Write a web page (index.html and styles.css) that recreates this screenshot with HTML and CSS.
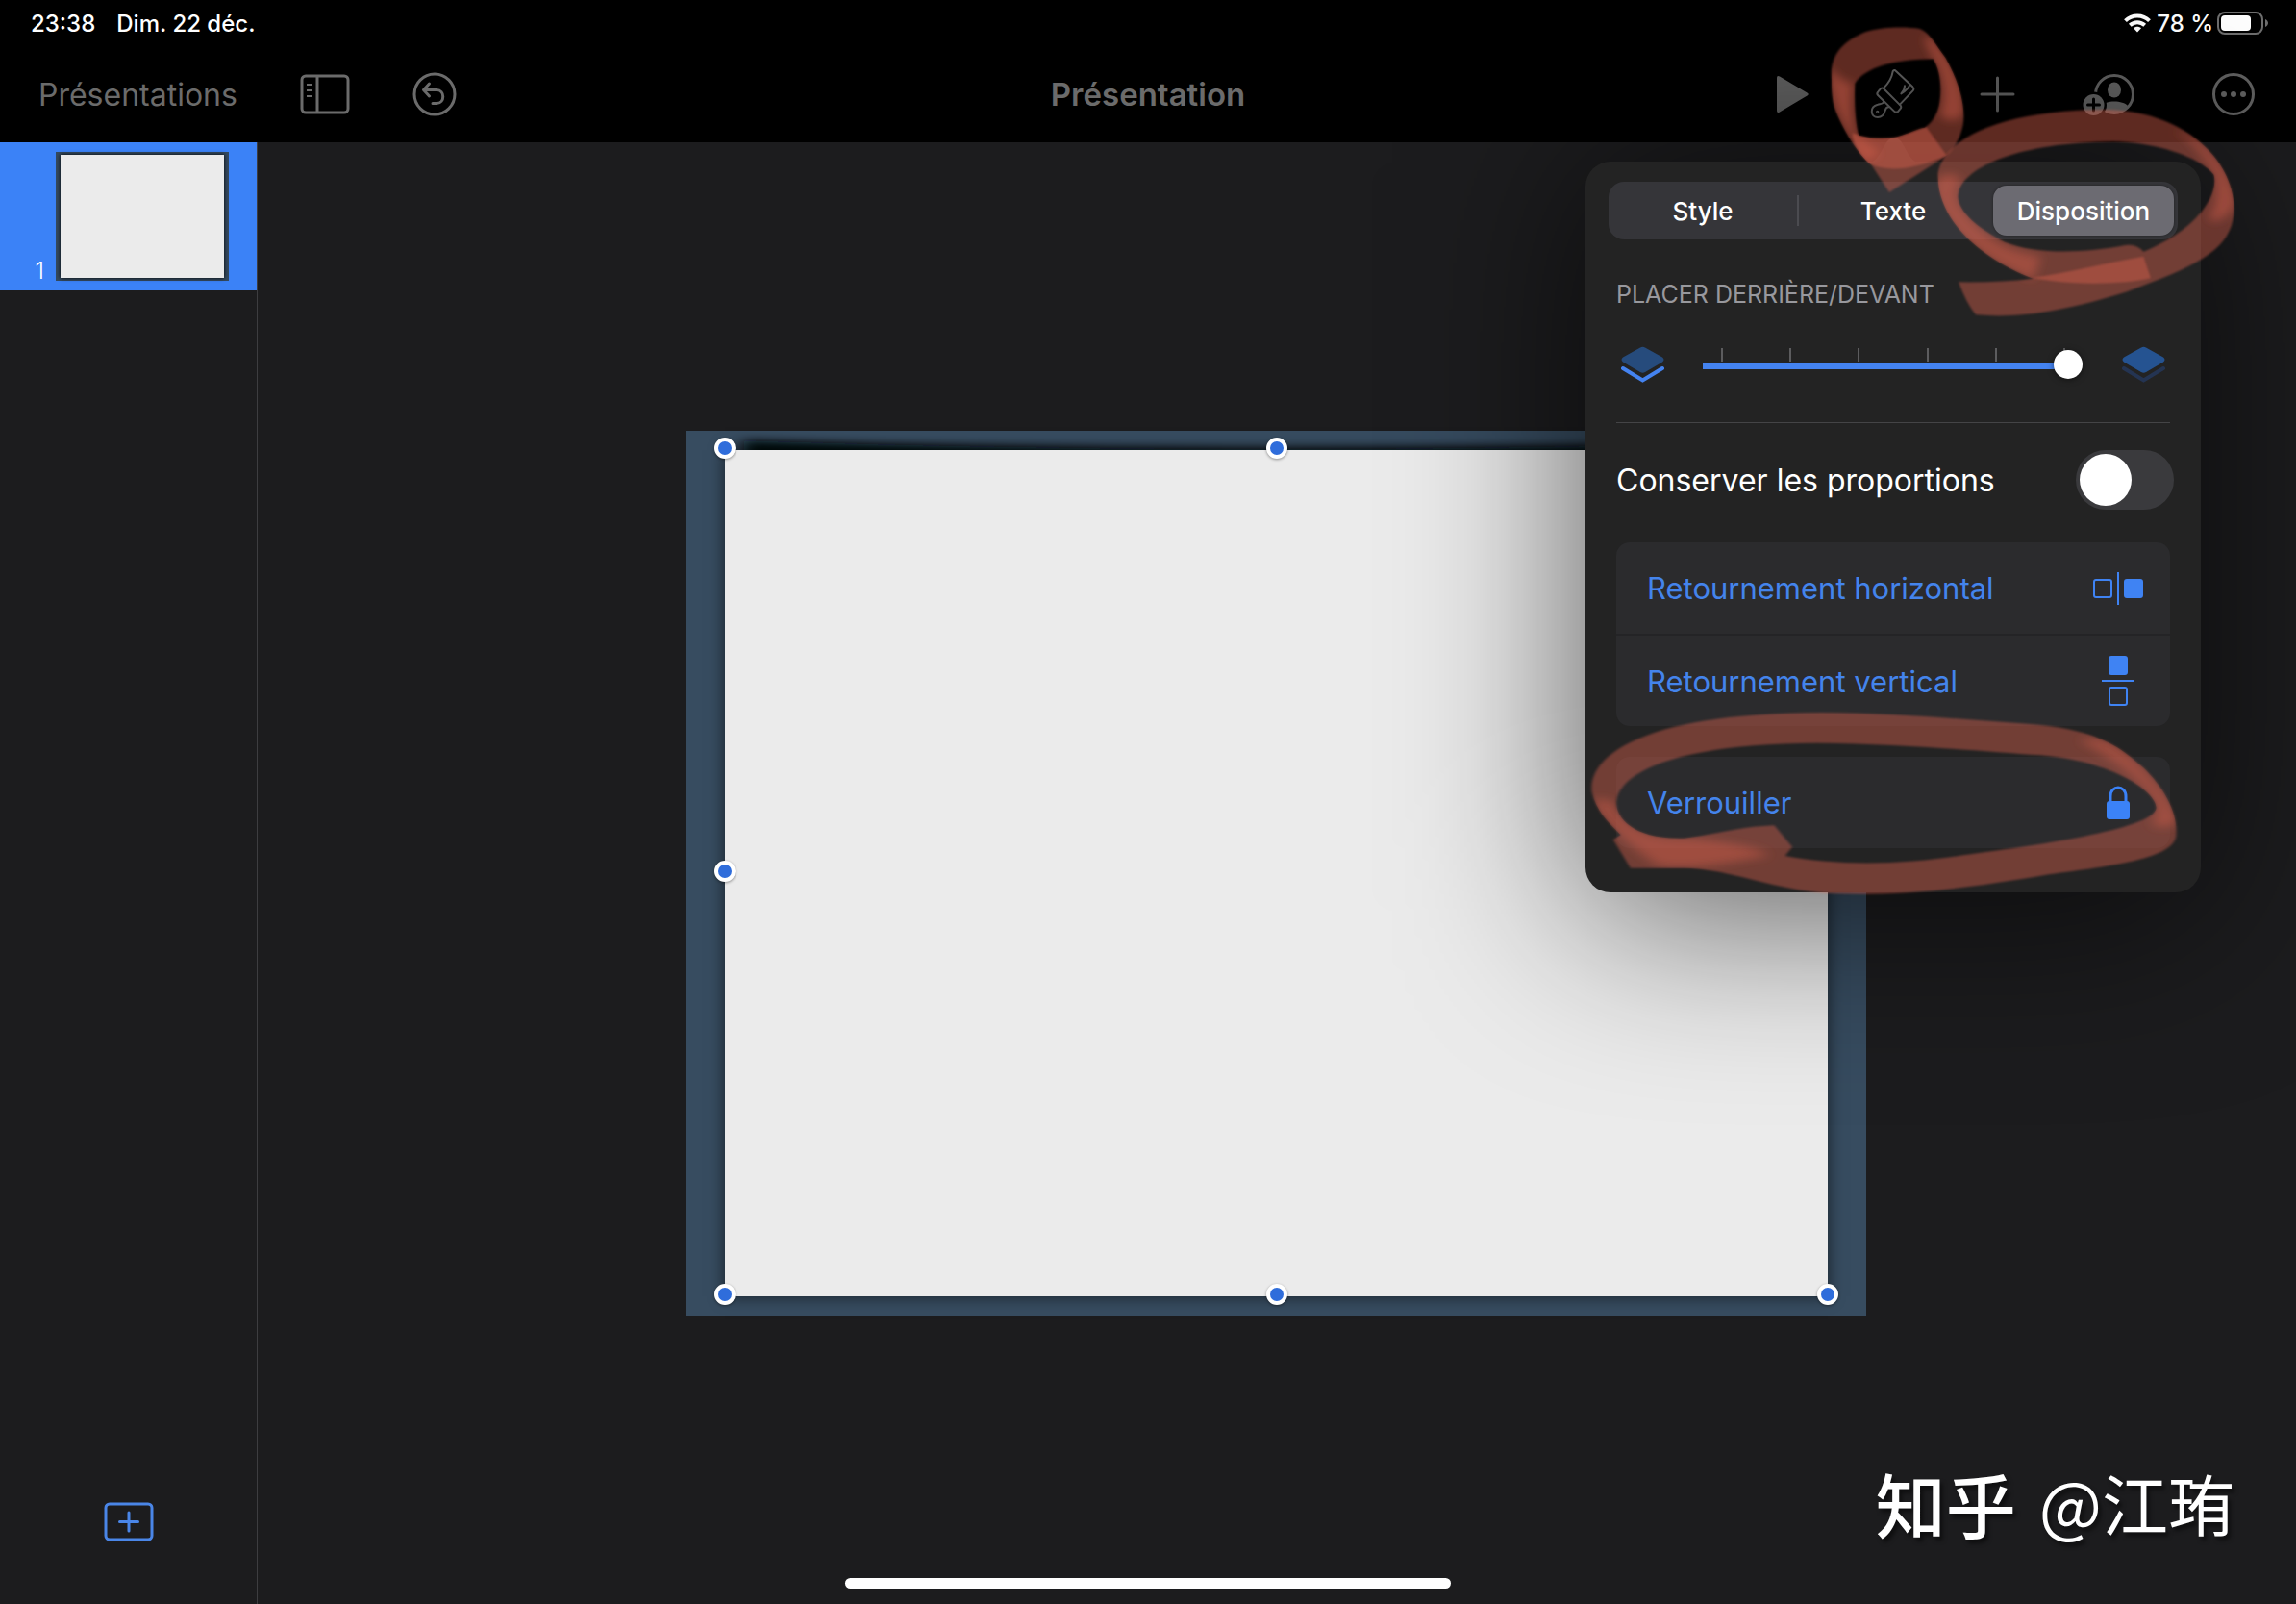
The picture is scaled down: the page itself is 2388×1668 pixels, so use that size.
FILE: index.html
```html
<!DOCTYPE html>
<html lang="fr">
<head>
<meta charset="utf-8">
<meta name="viewport" content="width=device-width, initial-scale=1">
<title>Présentation</title>
<link rel="stylesheet" href="styles.css">
</head>
<body>
<div class="app">
  <header class="topbar">
    <div class="status">
      <div class="status-left"><span>23:38</span><span>Dim. 22 déc.</span></div>
      <div class="status-right">
        <svg class="wifi" width="28" height="20" viewBox="0 0 28 20" aria-hidden="true">
          <g fill="none" stroke="#fff" stroke-width="4">
            <path d="M1.5 7.6C8.500 .8 19.500 .8 26.500 7.600"/>
            <path d="M6.300 12.300C10.800 8.100 17.200 8.100 21.700 12.300"/>
          </g>
          <path d="M14 19.500l-4-4.200c2.300-2 5.700-2 8 0z" fill="#fff"/>
        </svg>
        <span>78 %</span>
        <svg width="54" height="26" viewBox="0 0 54 26" aria-hidden="true">
          <rect x="1" y="2" width="46" height="22" rx="7" fill="none" stroke="#6e6e6e" stroke-width="2"/>
          <rect x="4" y="5" width="31" height="16" rx="4" fill="#fff"/>
          <path d="M50 9c4 2 4 6 0 8z" fill="#6e6e6e"/>
        </svg>
      </div>
    </div>
    <nav class="toolbar">
      <div class="tools-left">
        <a class="back" href="#">Présentations</a>
        <button class="tool" aria-label="Présentation des vignettes">
          <svg width="52" height="42" viewBox="0 0 52 42" fill="none" stroke="currentColor" stroke-width="3">
            <rect x="2" y="2" width="48" height="38" rx="4"/>
            <path d="M18 2v38"/><path d="M7 11h6M7 17h6M7 23h6" stroke-width="2"/>
          </svg>
        </button>
        <button class="tool" aria-label="Annuler">
          <svg width="46" height="46" viewBox="0 0 46 46" fill="none" stroke="currentColor" stroke-width="3" stroke-linecap="round" stroke-linejoin="round">
            <circle cx="23" cy="23" r="21"/>
            <path d="M17.500 12l-6 6.500 6 6.500M12 18.500h13c9 0 9 14 0 14h-4"/>
          </svg>
        </button>
      </div>
      <h1 class="title">Présentation</h1>
      <div class="tools-right">
        <button class="tool" aria-label="Lire">
          <svg width="33" height="40" viewBox="0 0 33 40"><path d="M0 3Q0 0 3 1.600L31.500 18.500Q34 20 31.500 21.500L3 38.400Q0 40 0 37z" fill="#616161"/></svg>
        </button>
        <button class="tool" aria-label="Format">
          <svg width="47" height="52" viewBox="165 156 141 156" fill="none" stroke="currentColor" stroke-width="6" stroke-linejoin="round" stroke-linecap="round">
            <path d="M208 214C224 198 233 182 236 163Q240 156 246 162L298 211Q304 218 298 224L258 266"/>
            <path d="M289 204C286 214 276 224 262 232C270 224 273 217 273 208"/>
            <path d="M207 216L259 268Q265 274 258 281L253 287Q246 293 240 287L190 238Q184 232 190 226L195 220Q201 212 207 216z"/>
            <path d="M207 254C208 264 200 263 189 266C163 272 165 306 189 306C208 306 210 292 212 285C215 274 220 273 225 274"/>
            <circle cx="188" cy="289" r="2"/>
          </svg>
        </button>
        <button class="tool" aria-label="Insérer">
          <svg width="43" height="40" viewBox="0 0 43 40" stroke="currentColor" stroke-width="3" stroke-linecap="round"><path d="M21.500 3v34M5 20h33"/></svg>
        </button>
        <button class="tool" aria-label="Collaborer">
          <svg width="64" height="48" viewBox="0 0 64 48">
            <circle cx="36" cy="24" r="19.500" fill="none" stroke="currentColor" stroke-width="3"/>
            <ellipse cx="36" cy="19.500" rx="7" ry="8" fill="currentColor"/>
            <path d="M22 36c5-6 23-6 28 0c-6 10-22 10-28 0z" fill="currentColor"/>
            <circle cx="14.500" cy="35" r="13.500" fill="#000"/>
            <circle cx="14.500" cy="35" r="11" fill="currentColor"/>
            <path d="M14.500 29v12M8.500 35h12" stroke="#000" stroke-width="3" stroke-linecap="round"/>
          </svg>
        </button>
        <button class="tool" aria-label="Plus">
          <svg width="64" height="46" viewBox="0 0 64 46" fill="currentColor">
            <circle cx="32" cy="23" r="20.500" fill="none" stroke="currentColor" stroke-width="3"/>
            <circle cx="22" cy="23" r="3"/><circle cx="32" cy="23" r="3"/><circle cx="42" cy="23" r="3"/>
          </svg>
        </button>
      </div>
    </nav>
  </header>

  <div class="body">
    <aside class="sidebar">
      <button class="thumb" aria-label="Diapositive 1">
        <span class="thumb-no">1</span>
        <span class="thumb-slide"><span class="thumb-object"></span></span>
      </button>
      <button class="add" aria-label="Ajouter une diapositive">
        <svg width="52" height="42" viewBox="0 0 52 42" fill="none" stroke="#4a86e8" stroke-width="3" stroke-linecap="round">
          <rect x="2" y="2" width="48" height="37" rx="4"/><path d="M26 11v19M16.500 20.500h19"/>
        </svg>
      </button>
    </aside>
    <main class="stage">
      <div class="slide">
        <svg class="curl" viewBox="0 0 1147 40" preserveAspectRatio="none" aria-hidden="true">
          <defs><filter id="soft" x="-5%" y="-80%" width="110%" height="260%"><feGaussianBlur stdDeviation="8 5"/></filter></defs>
          <path d="M20 10Q570 28 1127 10V40H20z" fill="#04070b" filter="url(#soft)"/>
        </svg>
        <div class="object">
          <i class="handle tl"></i><i class="handle tc"></i>
          <i class="handle ml"></i>
          <i class="handle bl"></i><i class="handle bc"></i><i class="handle br"></i>
        </div>
      </div>
    </main>
  </div>

  <div class="popover-shade"></div>
  <section class="popover" aria-label="Format">
    <div class="segments" role="radiogroup" aria-label="Onglet">
      <label class="segment"><input type="radio" name="tab"><span>Style</span></label>
      <label class="segment"><input type="radio" name="tab"><span>Texte</span></label>
      <label class="segment"><input type="radio" name="tab" checked><span>Disposition</span></label>
    </div>
    <label class="caption" for="order">PLACER DERRIÈRE/DEVANT</label>
    <div class="order">
      <svg width="45" height="38" viewBox="0 0 45 38" aria-hidden="true">
        <path d="M20 1.500Q22.500 0 25 1.500L43 11.500Q46 14 43 16.500L25 27Q22.500 28.500 20 27L2 16.500Q-1 14 2 11.500z" fill="#264b7c"/>
        <path d="M2 23L22.500 35.500L43 23" fill="none" stroke="#4483f0" stroke-width="4" stroke-linecap="round"/>
      </svg>
      <div class="range">
        <div class="ticks"><i></i><i></i><i></i><i></i><i></i><i></i></div>
        <input id="order" type="range" min="0" max="5" value="5">
      </div>
      <svg width="45" height="38" viewBox="0 0 45 38" aria-hidden="true">
        <path d="M2 23L22.500 35.500L43 23" fill="none" stroke="#243452" stroke-width="4" stroke-linecap="round"/>
        <path d="M20 1.500Q22.500 0 25 1.500L43 11.500Q46 14 43 16.500L25 27Q22.500 28.500 20 27L2 16.500Q-1 14 2 11.500z" fill="#255391"/>
      </svg>
    </div>
    <hr class="rule">
    <label class="constrain"><span>Conserver les proportions</span><input class="switch" type="checkbox" role="switch"></label>
    <div class="group">
      <button class="action"><span>Retournement horizontal</span>
        <svg width="54" height="54" viewBox="0 0 54 54" fill="none" stroke="#3f83f3" stroke-width="2" aria-hidden="true">
          <rect x="2" y="18" width="18" height="18" rx="2"/><path d="M27 10v34"/><rect x="34" y="18" width="18" height="18" rx="2" fill="#3f83f3"/>
        </svg></button>
      <button class="action"><span>Retournement vertical</span>
        <svg width="54" height="54" viewBox="0 0 54 54" fill="none" stroke="#3f83f3" stroke-width="2" aria-hidden="true">
          <rect x="18" y="2" width="18" height="18" rx="2" fill="#3f83f3"/><path d="M10 27h34"/><rect x="18" y="34" width="18" height="18" rx="2"/>
        </svg></button>
    </div>
    <div class="group">
      <button class="action"><span>Verrouiller</span>
        <svg width="54" height="36" viewBox="0 0 54 36" aria-hidden="true">
          <rect x="15" y="16" width="24" height="19" rx="3" fill="#3b82f7"/>
          <path d="M19 18V11C19 -1 35 -1 35 11V18" fill="none" stroke="#3b82f7" stroke-width="3"/>
        </svg></button>
    </div>
  </section>

  <svg class="pointer" width="50" height="26" viewBox="0 0 50 26" aria-hidden="true"><path d="M0 26C10 24 14 6 20 2Q25 -2 30 2C36 6 40 24 50 26z" fill="#232323"/></svg>

  <svg class="marks" width="748" height="960" viewBox="1640 0 748 960" aria-hidden="true">
    <defs>
      <filter id="ink" x="-5%" y="-5%" width="110%" height="110%"><feGaussianBlur stdDeviation="3"/></filter>
      <filter id="wash" x="-20%" y="-20%" width="140%" height="140%"><feGaussianBlur stdDeviation="14"/></filter>
      <clipPath id="clip-a"><path id="ring-a" clip-rule="evenodd" d="M45 190C38 110 80 70 150 40C210 22 280 24 320 30C350 40 370 80 400 120C440 190 465 270 455 330C445 375 425 410 400 428L225 540L170 455C130 430 60 310 50 260C45 230 45 210 45 190zM118 200C150 150 240 125 362 124C385 160 390 220 380 270C370 310 350 330 335 338C310 340 270 365 240 368Q180 375 130 362C120 330 115 260 118 200z"/></clipPath>
      <clipPath id="clip-b"><path id="ring-b" clip-rule="evenodd" d="M575 540C590 430 760 340 1050 342C1260 350 1395 500 1396 650C1396 780 1290 830 1100 910C930 970 800 995 680 982Q655 950 632 880Q740 882 840 870C700 810 570 690 575 540zM632 600C650 520 800 445 1060 442C1200 445 1310 500 1340 545C1355 610 1290 720 1145 785Q1125 760 1095 765C980 790 850 795 760 755C680 710 620 650 632 600z"/></clipPath>
      <clipPath id="clip-c"><path id="ring-c" clip-rule="evenodd" d="M35 850C25 740 150 605 570 603C750 605 900 625 1050 638C1230 655 1280 730 1320 775C1370 840 1402 920 1396 990C1385 1060 1250 1080 1100 1108C900 1155 750 1175 600 1168C460 1160 360 1090 250 1088H125L85 1000L102 985C70 940 45 910 35 850zM92 880C100 790 230 700 560 698C760 700 950 725 1080 736C1250 755 1350 850 1350 900C1345 970 1050 1020 900 1048C750 1080 600 1080 485 1050L502 1022L460 955C370 960 320 985 250 995C130 1000 90 930 92 880z"/></clipPath>
    </defs>
    <svg x="1890" y="20" width="200" height="190" viewBox="0 0 600 570">
      <g class="ink">
        <use href="#ring-a" filter="url(#ink)"/>
        <g clip-path="url(#clip-a)">
          <path filter="url(#wash)" d="M35 150C38 220 60 310 150 440L200 420L120 362C105 310 105 240 112 195C85 200 70 180 35 150z"/>
          <path filter="url(#ink)" d="M110 355C190 390 260 365 340 336L404 425C300 470 220 478 160 450C130 420 110 380 110 355z"/>
          <path filter="url(#wash)" d="M330 60C345 90 355 110 362 124C400 180 400 260 382 300C410 320 430 320 455 300C465 220 420 120 355 55z"/>
        </g>
      </g>
    </svg>
    <svg x="1800" y="0" width="588" height="340" viewBox="0 0 1568 1020" preserveAspectRatio="none">
      <g class="ink">
        <use href="#ring-b" filter="url(#ink)"/>
        <g clip-path="url(#clip-b)">
          <path filter="url(#wash)" d="M565 570C570 690 690 810 840 872L860 800C760 780 700 740 640 650C620 620 620 590 640 560C620 540 590 530 565 570z"/>
          <path filter="url(#ink)" d="M780 850C900 895 1080 890 1165 868L1145 800C1040 820 940 850 840 866z"/>
          <path filter="url(#wash)" d="M1230 405C1270 430 1310 480 1342 550C1350 610 1345 640 1325 680C1340 700 1370 690 1400 640C1402 550 1320 430 1230 405z"/>
        </g>
      </g>
    </svg>
    <svg x="1640" y="540" width="700" height="420" viewBox="0 0 1568 1260" preserveAspectRatio="none">
      <g class="ink">
        <use href="#ring-c" filter="url(#ink)"/>
        <g clip-path="url(#clip-c)">
          <path filter="url(#wash)" d="M35 870C50 920 100 1000 190 1080C280 1095 380 1065 450 1048C420 1020 320 1000 250 995C150 1000 90 930 85 880z"/>
          <path filter="url(#wash)" d="M1170 690C1230 730 1330 820 1350 900C1350 930 1345 940 1340 950C1360 970 1390 960 1400 940C1390 880 1320 770 1265 715C1220 680 1200 680 1170 690z"/>
        </g>
      </g>
    </svg>
  </svg>

  <div class="watermark"><span class="brand">知乎</span><span>@江珛</span></div>
  <div class="home"></div>
</div>
</body>
</html>
```
FILE: styles.css
```css
* { box-sizing: border-box; }

body {
  margin: 0;
  background: #1c1c1e;
  color: #fff;
  font-family: Inter, "Liberation Sans", sans-serif;
}

button {
  margin: 0;
  padding: 0;
  border: 0;
  background: none;
  color: inherit;
  font: inherit;
}

svg { display: block; flex: none; }

.app {
  position: relative;
  display: flex;
  flex-direction: column;
  min-height: 100vh;
  overflow: hidden;
}

/* Top bar */
.topbar { background: #000; }

.status {
  display: flex;
  justify-content: space-between;
  align-items: center;
  height: 48px;
  padding: 0 28px 0 32px;
  font-size: 24px;
  font-weight: 500;
}
.status-left { display: flex; gap: 22px; }
.status-right { display: flex; align-items: center; gap: 4px; }
.status-right span { margin-left: 2px; }

.toolbar {
  display: grid;
  grid-template-columns: 1fr auto 1fr;
  align-items: center;
  height: 100px;
  padding: 0 33px;
  color: #6b6b6b;
}
.tools-left, .tools-right { display: flex; align-items: center; gap: 64px; }
.tools-left { gap: 65px; padding-left: 7px; }
.tools-right { justify-content: flex-end; color: #606060; }
.back { color: #6b6b6b; font-size: 32px; text-decoration: none; }
.title { margin: 0; font-size: 33px; font-weight: 600; }

/* Slide list */
.body { display: flex; flex: 1; }

.sidebar {
  display: flex;
  flex-direction: column;
  justify-content: space-between;
  width: 268px;
  border-right: 1px solid #3d3d40;
}
.thumb {
  display: flex;
  align-items: flex-end;
  justify-content: flex-end;
  gap: 12px;
  padding: 10px 29px 10px 0;
  background: #3b82f7;
}
.thumb-no { font-size: 24px; font-weight: 300; line-height: 20px; }
.thumb-slide {
  display: flex;
  width: 180px;
  height: 134px;
  padding: 3px 5px;
  background: #34495e;
}
.thumb-object { flex: 1; background: #ebebeb; box-shadow: 0 0 4px #000; }
.add { align-self: center; margin-bottom: 64px; }

/* Canvas */
.stage { display: flex; flex: 1; padding: 300px 447px 300px 446px; }
.slide {
  position: relative;
  display: flex;
  flex: 1;
  padding: 20px 40px;
  background: #374c60;
}
.curl {
  position: absolute;
  top: 0;
  left: 40px;
  width: calc(100% - 80px);
  height: 40px;
}
.object {
  position: relative;
  flex: 1;
  background: #ebebeb;
  box-shadow: 0 0 16px rgba(0, 0, 0, .6);
}
.handle {
  position: absolute;
  width: 22px;
  height: 22px;
  margin: -13px 0 0 -11px;
  border: 4px solid #fff;
  border-radius: 50%;
  background: #2f6ddb;
  box-shadow: 0 1px 3px rgba(0, 0, 0, .4);
}
.tl { left: 0; top: 0; }
.tc { left: 50%; top: 0; }
.ml { left: 0; top: 50%; }
.bl { left: 0; top: 100%; }
.bc { left: 50%; top: 100%; }
.br { left: 100%; top: 100%; }

/* Format popover */
.popover, .popover-shade {
  position: absolute;
  top: 168px;
  right: 99px;
  width: 640px;
  border-radius: 26px;
}
.popover {
  padding: 21px 32px 46px;
  background: #232323;
}
.popover-shade {
  height: 780px;
  background: rgba(0, 0, 0, .62);
  filter: blur(96px);
}
.pointer { position: absolute; top: 143px; right: 393px; }

.segments {
  display: flex;
  gap: 10px;
  height: 60px;
  margin: 0 -8px;
  padding: 4px;
  border-radius: 16px;
  background: #353539;
}
.segment {
  position: relative;
  display: flex;
  flex: 1 1 0;
  font-size: 26px;
  font-weight: 500;
}
.segment:nth-child(2)::before {
  content: "";
  position: absolute;
  left: -6px;
  top: 10px;
  bottom: 10px;
  width: 2px;
  background: #4b4b50;
}
.segment input { position: absolute; opacity: 0; }
.segment span {
  display: flex;
  flex: 1;
  align-items: center;
  justify-content: center;
  border-radius: 14px;
}
.segment input:checked + span { background: #6c6b72; box-shadow: 0 0 3px rgba(0, 0, 0, .4); }

.caption {
  display: block;
  margin-top: 41px;
  color: #98989d;
  font-size: 25px;
  line-height: 32px;
}
.order {
  display: flex;
  justify-content: space-between;
  align-items: flex-start;
  margin-top: 38px;
  padding: 0 5px;
}
.range { width: 395px; height: 38px; margin-right: 2px; padding-top: 2px; }
.ticks {
  display: flex;
  justify-content: space-between;
  height: 14px;
  padding: 0 17px 0 19px;
}
.ticks i { width: 2px; background: #5c5c5e; }
.range input {
  -webkit-appearance: none;
  appearance: none;
  display: block;
  width: 100%;
  height: 30px;
  margin: -12px 0 0;
  background: linear-gradient(#4483f0, #4483f0) 0 14px / 380px 6px no-repeat;
  border-radius: 3px;
}
.range input::-webkit-slider-thumb {
  -webkit-appearance: none;
  width: 30px;
  height: 30px;
  border-radius: 50%;
  background: #fff;
  box-shadow: 0 1px 6px rgba(0, 0, 0, .5);
}
.rule { height: 1px; margin: 41px 0 0; border: 0; background: #444446; }

.constrain {
  display: flex;
  align-items: center;
  justify-content: space-between;
  margin: 28px -4px 34px 0;
  font-size: 32px;
}
.switch {
  -webkit-appearance: none;
  appearance: none;
  width: 102px;
  height: 62px;
  margin: 0;
  padding: 4px;
  border-radius: 31px;
  background: #3a3a3d;
}
.switch::before {
  content: "";
  display: block;
  width: 54px;
  height: 54px;
  border-radius: 50%;
  background: #fff;
}

.group {
  border-radius: 14px;
  background: #2b2b2d;
}
.group + .group { margin-top: 32px; }
.action {
  display: flex;
  align-items: center;
  justify-content: space-between;
  width: 100%;
  height: 95px;
  padding: 0 27px 0 32px;
  color: #4484ec;
  font-size: 31px;
}
.action + .action { height: 96px; border-top: 2px solid #242426; }

/* Marker strokes */
.marks { position: absolute; top: 0; right: 0; pointer-events: none; }
.ink { fill: #da5e4c; fill-opacity: .43; fill-rule: evenodd; }

.watermark {
  position: absolute;
  right: 64px;
  bottom: 53px;
  display: flex;
  align-items: center;
  gap: 24px;
  font-family: "Noto Sans CJK SC", sans-serif;
  font-size: 69px;
  text-shadow: 3px 4px 4px rgba(0, 0, 0, .5);
}
.brand { font-size: 73px; font-weight: 500; }

.home {
  position: absolute;
  left: 50%;
  bottom: 16px;
  width: 630px;
  height: 11px;
  border-radius: 6px;
  background: #fff;
  transform: translateX(-50%);
}
```
